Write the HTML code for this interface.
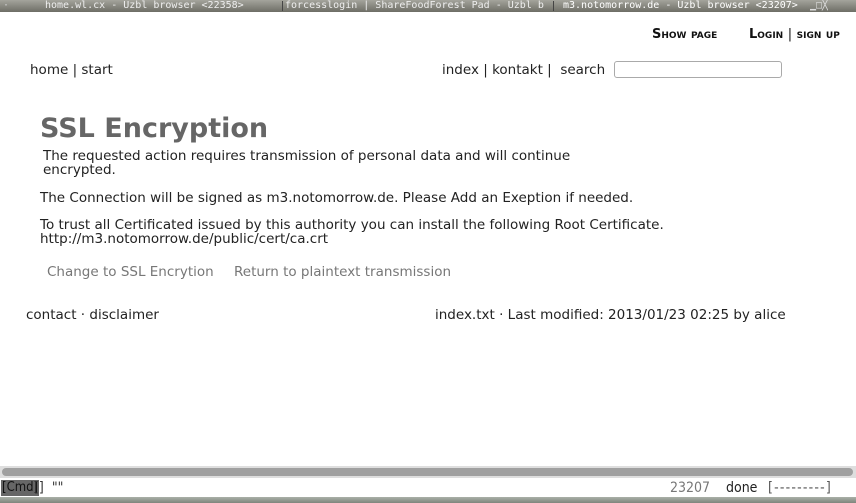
<!DOCTYPE html>
<html><head><style>
*{margin:0;padding:0;box-sizing:border-box}
body{width:856px;height:503px;overflow:hidden;background:#fff;font-family:"DejaVu Sans","Liberation Sans",sans-serif;color:#222;position:relative}
.a{position:absolute;white-space:nowrap}
#tb{position:absolute;left:0;top:0;width:856px;height:12px;background:linear-gradient(#a4a49c,#6e6e66);font-family:"DejaVu Sans Mono",monospace;font-size:10px;color:#eee;line-height:12px;overflow:hidden}
#tb span{position:absolute;top:0;overflow:hidden}
.sep{position:absolute;top:1px;width:1px;height:10px;background:#444}
.sc{font-variant:small-caps;font-weight:bold;font-size:13px;color:#111}
.t{font-size:13.5px}
</style></head><body>
<div id="tb">
<span style="left:3px;color:#ccc">·</span>
<span style="left:45px">home.wl.cx - Uzbl browser &lt;22358&gt;</span>
<div class="sep" style="left:282px"></div>
<span style="left:285px;width:266px">forcesslogin | ShareFoodForest Pad - Uzbl b</span>
<div class="sep" style="left:553px"></div>
<span style="left:563px;color:#fff">m3.notomorrow.de - Uzbl browser &lt;23207&gt;</span>
<span style="left:810px;color:#ddd">▁□╳</span>
</div>
<div class="a sc" style="left:652px;top:27px">Show page</div>
<div class="a sc" style="left:749px;top:27px">Login <span style="font-weight:normal">|</span> sign up</div>
<div class="a t" style="left:30px;top:62px">home | start</div>
<div class="a t" style="left:442px;top:62px">index | kontakt | &nbsp;search</div>
<div class="a" style="left:614px;top:61px;width:168px;height:17px;border:1px solid #aaa;border-radius:3px"></div>
<div class="a" style="left:40px;top:113px;font-size:27px;font-weight:bold;color:#666">SSL Encryption</div>
<div class="a t" style="left:43px;top:149px;line-height:14px">The requested action requires transmission of personal data and will continue<br>encrypted.</div>
<div class="a t" style="left:40px;top:190px">The Connection will be signed as m3.notomorrow.de. Please Add an Exeption if needed.</div>
<div class="a t" style="left:40px;top:218px;line-height:14px">To trust all Certificated issued by this authority you can install the following Root Certificate.<br>http://m3.notomorrow.de/public/cert/ca.crt</div>
<div class="a t" style="left:47px;top:264px;color:#777">Change to SSL Encrytion</div>
<div class="a t" style="left:234px;top:264px;color:#777">Return to plaintext transmission</div>
<div class="a t" style="left:26px;top:307px">contact · disclaimer</div>
<div class="a t" style="left:435px;top:307px">index.txt · Last modified: 2013/01/23 02:25 by alice</div>
<div class="a" style="left:0;top:466px;width:856px;height:12px;background:#dedede"></div>
<div class="a" style="left:2px;top:468px;width:851px;height:8px;background:#a0a0a0;border-radius:4px"></div>
<div class="a" style="left:0;top:480px;height:16px;font-family:'DejaVu Sans Condensed','DejaVu Sans',sans-serif;font-size:14px;line-height:16px;width:856px">
<span style="position:absolute;left:1px;background:#666;color:#111;padding:0 1px;font-size:13px">[Cmd]</span>
<span style="position:absolute;left:34px;color:#333">[] &nbsp;""</span>
<span style="position:absolute;left:670px;color:#777">23207</span>
<span style="position:absolute;left:726px;color:#222">done</span>
<span style="position:absolute;left:768px;color:#555;letter-spacing:1.2px">[---------]</span>
</div>
<div class="a" style="left:0;top:497px;width:856px;height:6px;background:linear-gradient(#aab0a8,#7f857c)"></div>
</body></html>
